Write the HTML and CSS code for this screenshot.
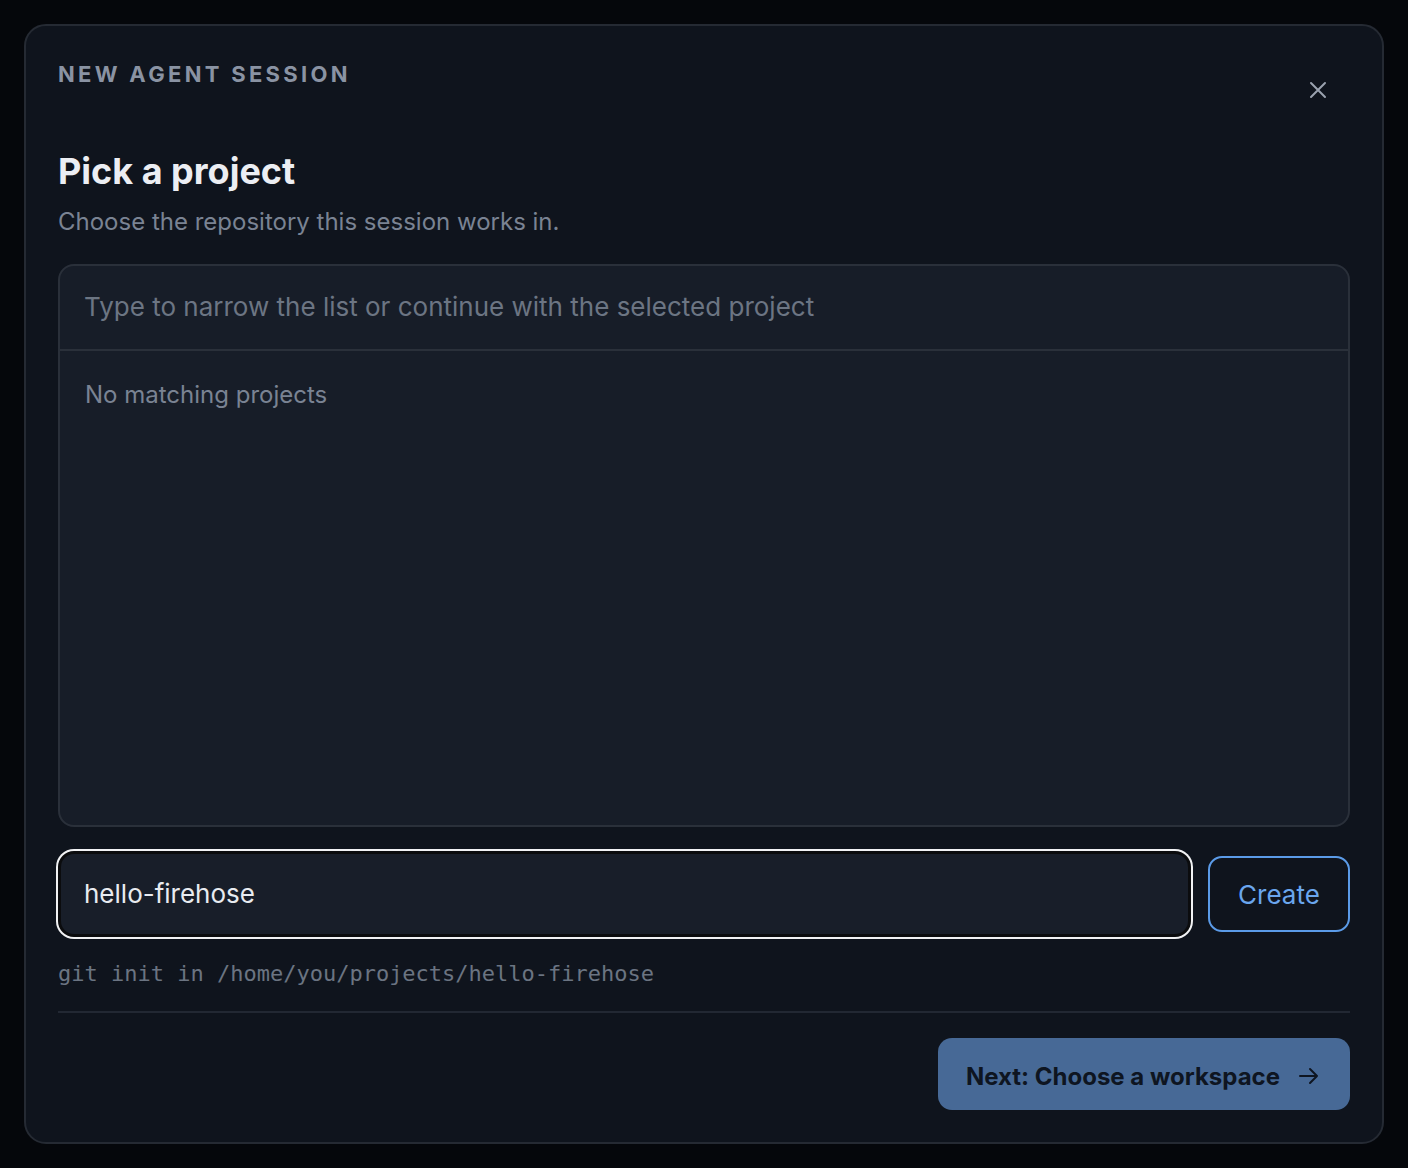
FILE: index.html
```html
<!DOCTYPE html>
<html lang="en">
<head>
<meta charset="utf-8">
<title>New agent session</title>
<link rel="stylesheet" href="styles.css">
</head>
<body>
  <div class="dialog" role="dialog" aria-labelledby="dlg-title">
    <div class="dialog-header">
      <div class="eyebrow">New agent session</div>
      <button class="close-btn" aria-label="Close">
        <svg width="18" height="18" viewBox="0 0 18 18" fill="none" stroke="currentColor" stroke-width="2" stroke-linecap="round">
          <path d="M2 2 L16 16 M16 2 L2 16"/>
        </svg>
      </button>
    </div>

    <h1 class="title" id="dlg-title">Pick a project</h1>
    <p class="subtitle">Choose the repository this session works in.</p>

    <div class="picker">
      <div class="picker-search">
        <input class="picker-input" type="text" placeholder="Type to narrow the list or continue with the selected project">
      </div>
      <div class="picker-list">
        <div class="picker-empty">No matching projects</div>
      </div>
    </div>

    <div class="create-row">
      <div class="name-field">
        <input class="name-input" type="text" value="hello-firehose">
      </div>
      <button class="create-btn">Create</button>
    </div>
    <div class="create-hint">git init in /home/you/projects/hello-firehose</div>

    <div class="dialog-footer">
      <button class="next-btn">
        <span>Next: Choose a workspace</span>
        <svg width="22" height="22" viewBox="0 0 22 22" fill="none" stroke="currentColor" stroke-width="2" stroke-linecap="round" stroke-linejoin="round">
          <path d="M2 11 H19 M12 4 L19 11 L12 18"/>
        </svg>
      </button>
    </div>
  </div>
</body>
</html>
```

FILE: styles.css
```css
* {
  box-sizing: border-box;
}

html, body {
  margin: 0;
  height: 100%;
}

body {
  background: #05070b;
  padding: 24px;
  font-family: Inter, "Noto Sans", "Liberation Sans", sans-serif;
}

.dialog {
  width: 1360px;
  height: 1120px;
  background: #0f141d;
  border: 2px solid #252a33;
  border-radius: 22px;
  padding: 32px;
  display: flex;
  flex-direction: column;
}

.dialog-header {
  display: flex;
  justify-content: space-between;
  align-items: flex-start;
}

.eyebrow {
  font-size: 22px;
  line-height: 33px;
  font-weight: 700;
  letter-spacing: 0.15em;
  text-transform: uppercase;
  color: #8a93a3;
}

.close-btn {
  margin-top: 12px;
  margin-right: 12px;
  width: 40px;
  height: 40px;
  display: flex;
  align-items: center;
  justify-content: center;
  background: none;
  border: 0;
  padding: 0;
  color: #9aa2af;
  cursor: pointer;
}

.title {
  margin: 39px 0 0;
  font-size: 36px;
  line-height: 44px;
  font-weight: 700;
  letter-spacing: 0;
  color: #eceef3;
}

.subtitle {
  margin: 11px 0 0;
  font-size: 24px;
  line-height: 36px;
  color: #7a8393;
}

.picker {
  margin-top: 24px;
  flex: 1;
  display: flex;
  flex-direction: column;
  background: #171d28;
  border: 2px solid #2a303a;
  border-radius: 16px;
  overflow: hidden;
}

.picker-search {
  height: 85px;
  border-bottom: 2px solid #2a303a;
  display: flex;
  align-items: center;
  padding: 0 25px 2px 24px;
}

.picker-input {
  width: 100%;
  background: transparent;
  border: 0;
  outline: none;
  font-family: inherit;
  font-size: 26px;
  color: #e8ebf0;
  padding: 0;
}

.picker-input::placeholder {
  color: #6c7583;
}

.picker-list {
  flex: 1;
  padding: 26px 25px;
}

.picker-empty {
  font-size: 24px;
  line-height: 36px;
  color: #7a8393;
}

.create-row {
  margin-top: 24px;
  display: flex;
  align-items: center;
  gap: 17px;
}

.name-field {
  flex: 1;
  height: 86px;
  border-radius: 16px;
  border: 3px solid #0b0c0e;
  box-shadow: 0 0 0 2px #f1f2f4;
  background: #181e29;
  display: flex;
  align-items: center;
  padding: 0 23px 1px 23px;
}

.name-input {
  width: 100%;
  background: transparent;
  border: 0;
  outline: none;
  padding: 0;
  font-family: inherit;
  font-size: 26px;
  color: #e8ebf0;
}

.create-btn {
  width: 142px;
  height: 76px;
  background: transparent;
  border: 2px solid #5b9be8;
  border-radius: 14px;
  color: #6aa6ee;
  font-family: inherit;
  font-size: 26px;
  cursor: pointer;
}

.create-hint {
  margin-top: 20px;
  font-family: "DejaVu Sans Mono", "Liberation Mono", monospace;
  font-size: 22px;
  line-height: 33px;
  color: #6b7482;
}

.dialog-footer {
  margin-top: 21px;
  border-top: 2px solid #222833;
  padding-top: 25px;
  display: flex;
  justify-content: flex-end;
}

.next-btn {
  height: 72px;
  padding: 4px 30px 0 28px;
  display: flex;
  align-items: center;
  gap: 18px;
  background: #476996;
  border: 0;
  border-radius: 14px;
  color: #0e1521;
  font-family: inherit;
  font-size: 24px;
  font-weight: 700;
  cursor: pointer;
}
```
